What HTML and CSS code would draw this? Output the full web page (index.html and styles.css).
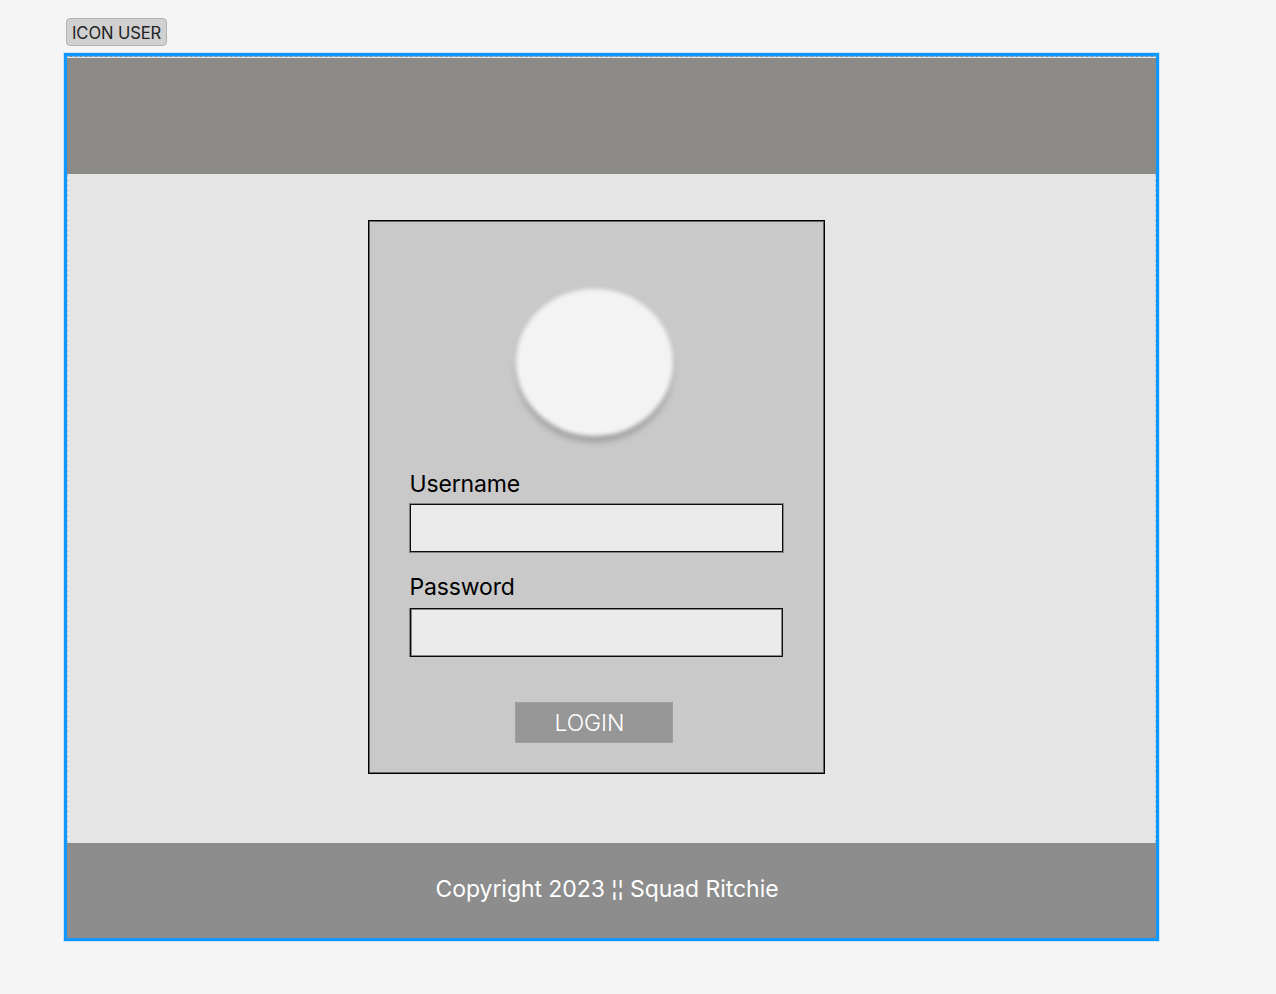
FILE: index.html
```
<!DOCTYPE html>
<html lang="en">
<head>
<meta charset="utf-8">
<title>Icon user</title>
<link rel="stylesheet" href="styles.css">
</head>
<body>
<div class="tag">ICON USER</div>
<div class="frame">
  <header class="header"></header>
  <main class="content">
    <form class="card">
      <div class="avatar"></div>
      <label class="label" for="username">Username</label>
      <input class="field" id="username" type="text">
      <label class="label label-password" for="password">Password</label>
      <input class="field field-password" id="password" type="password">
      <button class="login" type="button">LOGIN</button>
    </form>
  </main>
  <footer class="footer">Copyright 2023 ¦¦ Squad Ritchie</footer>
</div>
</body>
</html>
```
FILE: styles.css
```
* { box-sizing: border-box; }
body {
  margin: 0;
  height: 994px;
  padding: 18px 0 0 64px;
  background: #f5f5f5;
  font-family: Inter, sans-serif;
  overflow: hidden;
}
.tag {
  width: 101px;
  height: 28px;
  margin-left: 2px;
  padding-left: 5px;
  border: 1px solid #b2b2b2;
  border-radius: 4px;
  background: #d0d0d0;
  color: #222;
  font-size: 16.6px;
  letter-spacing: -.1px;
  line-height: 28px;
  white-space: nowrap;
}
.frame {
  display: flex;
  flex-direction: column;
  width: 1095px;
  height: 888px;
  margin-top: 7px;
  border: 3px solid #0f99ff;
  background: #e5e5e5;
  box-shadow: 0 0 0 1px rgba(15, 153, 255, .2);
}
.header {
  height: 118px;
  border-top: 1px dashed #7cbce8;
  background: linear-gradient(#e5e5e5 1px, #8c8a87 1px);
  background-clip: border-box;
  background-origin: padding-box;
}
.content {
  height: 669px;
  padding: 46px 0 0 301px;
  border: dashed #a9cbe3;
  border-width: 0 1px;
}
.card {
  display: flex;
  flex-direction: column;
  width: 457px;
  height: 554px;
  margin-left: -1px;
  padding: 67.5px 40px 0;
  border: 1px solid #000;
  outline: 1px solid #646464;
  outline-offset: -2px;
  background: #c9c9c9;
}
.avatar {
  width: 157px;
  height: 147.5px;
  margin-left: 106.5px;
  border-radius: 50%;
  background: #f3f3f3;
  box-shadow: 0 6px 5px rgba(0, 0, 0, .22);
  filter: blur(2px);
}
.label {
  height: 29px;
  margin-top: 34px;
  padding-left: .5px;
  font-size: 23px;
  font-weight: 380;
  letter-spacing: -.15px;
  line-height: 28px;
}
.field {
  width: 373px;
  height: 48px;
  margin: 5px 0 0 1px;
  border: 1px solid #0c0c0c;
  border-radius: 0;
  background: #ebebeb;
  box-shadow: 0 0 0 1px rgba(0, 0, 0, .35);
}
.label-password { margin-top: 21px; }
.field-password {
  height: 49px;
  margin-top: 6px;
  box-shadow: -1px 0 0 rgba(0, 0, 0, .35), inset 0 0 0 1px #858585;
}
.login {
  width: 158px;
  height: 41px;
  margin: 45px 0 0 106px;
  padding: 0 0 0 38.5px;
  border: 1px solid #9e9e9e;
  background: #969696;
  color: #fff;
  font: 300 23px/40px Inter, sans-serif;
  letter-spacing: -.1px;
  text-align: left;
}
.footer {
  flex: 1;
  padding: 32px 0 0 368.5px;
  background: #8d8d8d;
  color: #fff;
  font-size: 23px;
  font-weight: 380;
  letter-spacing: -.06px;
  line-height: 28px;
}
```
